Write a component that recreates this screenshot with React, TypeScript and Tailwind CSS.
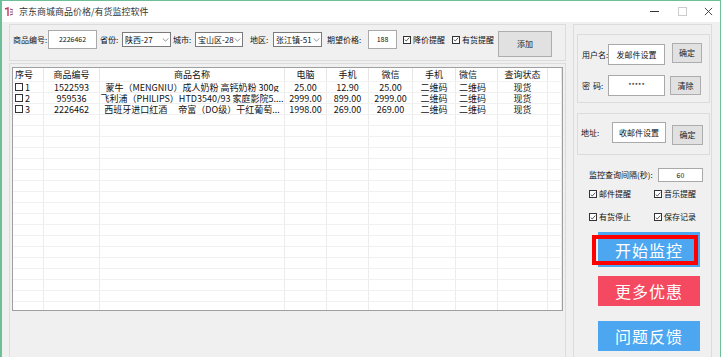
import React from "react";

function Check({ checked = false }: { checked?: boolean }) {
  return (
    <span className="flex h-[8px] w-[8px] shrink-0 items-center justify-center border border-[#333] bg-white">
      {checked && (
        <svg viewBox="0 0 8 8" className="h-[7px] w-[7px]">
          <path d="M1 4.2 L3 6 L7 1.5" fill="none" stroke="#222" strokeWidth="1" />
        </svg>
      )}
    </span>
  );
}

function Btn({ children, className = "" }: { children: React.ReactNode; className?: string }) {
  return (
    <div
      className={`flex items-center justify-center border border-[#adadad] bg-[#e1e1e1] text-[8px] text-[#222] ${className}`}
    >
      {children}
    </div>
  );
}

function Select({ value }: { value: string }) {
  return (
    <div className="mt-[7px] flex h-[15px] w-full items-center justify-between border border-[#7a7a7a] bg-white pl-[2px] pr-[1px] text-[8px]">
      <span className="overflow-hidden whitespace-nowrap">{value}</span>
      <svg viewBox="0 0 8 5" className="h-[4px] w-[7px] shrink-0">
        <path d="M0.5 0.5 L4 4 L7.5 0.5" fill="none" stroke="#555" strokeWidth="0.8" />
      </svg>
    </div>
  );
}

const cols = [
  { title: "序号", w: "w-[31px]", align: "justify-start pl-[2px]" },
  { title: "商品编号", w: "w-[56px]", align: "justify-center" },
  { title: "商品名称", w: "w-[185px]", align: "justify-center" },
  { title: "电脑", w: "w-[42px]", align: "justify-center" },
  { title: "手机", w: "w-[42px]", align: "justify-center" },
  { title: "微信", w: "w-[44px]", align: "justify-center" },
  { title: "手机", w: "w-[43px]", align: "justify-center" },
  { title: "微信", w: "w-[42px]", align: "justify-start pl-[3px]" },
  { title: "查询状态", w: "w-[50px]", align: "justify-center" },
  { title: "", w: "w-[14px]", align: "justify-center" },
];

const rows = [
  ["1", "1522593", "蒙牛（MENGNIU）成人奶粉 高钙奶粉 300g", "25.00", "12.90", "25.00", "二维码", "二维码", "现货"],
  ["2", "959536", "飞利浦（PHILIPS）HTD3540/93 家庭影院5....", "2999.00", "899.00", "2999.00", "二维码", "二维码", "现货"],
  ["3", "2226462", "西班牙进口红酒　 帝富（DO级）干红葡萄...", "1998.00", "269.00", "269.00", "二维码", "二维码", "现货"],
];

export default function App() {
  const empty = Array.from({ length: 19 });
  return (
    <div className="flex h-[357px] w-[721px] flex-col overflow-hidden border-l-2 border-r border-t border-[#6cbf97] bg-[#f0f0f0] font-['Noto_Sans_CJK_SC','Noto_Sans',sans-serif] text-[#111]">
      {/* title bar */}
      <div className="flex h-[21px] shrink-0 items-center bg-white">
        <svg viewBox="0 0 10 10" className="ml-[2px] h-[10px] w-[10px]">
          <path d="M1 2 L4 1 L4 9" fill="none" stroke="#c0395a" strokeWidth="1.4" />
          <path d="M6 2 L9 3 M6 5 L9 5 M6 8 L9 7" stroke="#8a4a8c" strokeWidth="1.2" />
        </svg>
        <span className="ml-[5px] text-[9px] text-[#333]">京东商城商品价格/有货监控软件</span>
        <div className="ml-auto flex items-center">
          <span className="h-px w-[9px] bg-[#333]" />
          <span className="ml-[19px] h-[9px] w-[9px] border border-[#ccc]" />
          <svg viewBox="0 0 10 10" className="ml-[17px] mr-[7px] h-[9px] w-[9px]">
            <path d="M1 1 L9 9 M9 1 L1 9" stroke="#333" strokeWidth="1" />
          </svg>
        </div>
      </div>

      {/* body */}
      <div className="flex flex-1 gap-[7px] pl-[7px] pt-[2px]">
        {/* left column */}
        <div className="flex w-[557px] flex-col gap-[2px]">
          <div className="flex h-[37px] shrink-0 items-start border border-[#dcdcdc] pl-[3px] text-[8px]">
            <span className="mt-[5px] flex h-[19px] w-[35px] items-center whitespace-nowrap">商品编号:</span>
            <div className="mt-[5px] flex h-[19px] w-[49px] items-center justify-center border border-[#a9a9a9] bg-white text-[7px]">
              2226462
            </div>
            <span className="ml-[3px] mt-[5px] flex h-[19px] w-[22px] items-center">省份:</span>
            <div className="w-[49px]">
              <Select value="陕西-27" />
            </div>
            <span className="ml-[2px] mt-[5px] flex h-[19px] w-[22px] items-center">城市:</span>
            <div className="w-[48px]">
              <Select value="宝山区-28" />
            </div>
            <span className="ml-[7px] mt-[5px] flex h-[19px] w-[23px] items-center">地区:</span>
            <div className="w-[49px]">
              <Select value="张江镇-51" />
            </div>
            <span className="ml-[5px] mt-[5px] flex h-[19px] w-[41px] items-center whitespace-nowrap">期望价格:</span>
            <div className="mt-[5px] flex h-[19px] w-[29px] items-center justify-center border border-[#a9a9a9] bg-white text-[7px]">
              188
            </div>
            <div className="ml-[6px] mt-[5px] flex h-[19px] w-[49px] items-center gap-[2px]">
              <Check checked />
              <span>降价提醒</span>
            </div>
            <div className="mt-[5px] flex h-[19px] w-[46px] items-center gap-[2px]">
              <Check checked />
              <span>有货提醒</span>
            </div>
            <Btn className="mt-[6px] h-[26px] w-[54px]">添加</Btn>
          </div>

          <div className="flex-1 border border-b-0 border-[#dcdcdc] pl-[2px] pt-[3px]">
            <div className="h-[244px] w-[551px] overflow-hidden border border-[#a0a0a0] bg-white text-[9px] leading-[11px]">
              <div className="flex h-[14px] border-b border-[#f2f2f2]">
                {cols.map((c, i) => (
                  <div key={i} className={`flex items-center border-r border-[#e6e6e6] ${c.w} ${c.align}`}>
                    {c.title}
                  </div>
                ))}
              </div>
              {rows.map((r) => (
                <div key={r[0]} className="flex h-[11px] border-b border-[#f0f0f0]">
                  <div className={`flex items-center gap-[2px] border-r border-[#ececec] ${cols[0].w} ${cols[0].align}`}>
                    <Check />
                    <span>{r[0]}</span>
                  </div>
                  {r.slice(1).map((v, i) => (
                    <div
                      key={i}
                      className={`flex items-center whitespace-nowrap border-r border-[#ececec] ${i === 1 ? "overflow-hidden" : ""} ${cols[i + 1].w} ${cols[i + 1].align}`}
                    >
                      {v}
                    </div>
                  ))}
                  <div className={`border-r border-[#ececec] ${cols[9].w}`} />
                </div>
              ))}
              {empty.map((_, k) => (
                <div key={k} className="flex h-[11px] border-b border-[#f0f0f0]">
                  {cols.map((c, i) => (
                    <div key={i} className={`border-r border-[#ececec] ${c.w}`} />
                  ))}
                </div>
              ))}
            </div>
          </div>
        </div>

        {/* right column */}
        <div className="flex w-[139px] flex-col border border-b-0 border-[#dcdcdc] px-[3px] pt-[9px] text-[8px]">
          <div className="flex h-[69px] w-[133px] flex-col border border-[#dcdcdc] pl-[4px]">
            <div className="mt-[8px] flex items-start">
              <span className="mt-[1px] flex h-[21px] w-[26px] items-center whitespace-nowrap">用户名:</span>
              <div className="mt-[1px] flex h-[21px] w-[57px] items-center justify-center border border-[#a9a9a9] bg-white">
                发邮件设置
              </div>
              <Btn className="ml-[7px] h-[20px] w-[30px]">确定</Btn>
            </div>
            <div className="mt-[10px] flex items-start">
              <span className="flex h-[21px] w-[26px] items-center whitespace-nowrap">
                密<span className="ml-[3px]">码:</span>
              </span>
              <div className="flex h-[21px] w-[57px] items-center justify-center border border-[#a9a9a9] bg-white text-[7px]">
                *****
              </div>
              <Btn className="ml-[5px] mt-[1px] h-[19px] w-[31px]">清除</Btn>
            </div>
          </div>

          <div className="mt-[10px] flex h-[42px] w-[133px] items-start border border-[#dcdcdc] pl-[3px]">
            <span className="mt-[8px] flex h-[21px] w-[31px] items-center">地址:</span>
            <div className="mt-[8px] flex h-[21px] w-[54px] items-center justify-center border border-[#a9a9a9] bg-white">
              收邮件设置
            </div>
            <Btn className="ml-[6px] mt-[11px] h-[20px] w-[31px]">确定</Btn>
          </div>

          <div className="ml-[12px] mt-[13px] flex items-center">
            <span className="w-[69px] whitespace-nowrap">监控查询间隔(秒):</span>
            <div className="flex h-[14px] w-[45px] items-center justify-center border border-[#a9a9a9] bg-white text-[7px]">
              60
            </div>
          </div>

          <div className="ml-[12px] mt-[6px] grid grid-cols-[65px_60px] gap-y-[11px]">
            {["邮件提醒", "音乐提醒", "有货停止", "保存记录"].map((t) => (
              <div key={t} className="flex items-center gap-[2px]">
                <Check checked />
                <span>{t}</span>
              </div>
            ))}
          </div>

          <div className="relative ml-[21px] mt-[9px] flex h-[35px] w-[102px] items-center justify-center bg-[#4da6f0] text-[16px] tracking-[1px] text-white">
            开始监控
            <div className="absolute left-[-6px] top-[3px] h-[30px] w-[106px] border-[4px] border-[#f00]" />
          </div>
          <div className="ml-[21px] mt-[9px] flex h-[30px] w-[102px] items-center justify-center bg-[#f44960] text-[16px] tracking-[1px] text-white">
            更多优惠
          </div>
          <div className="ml-[21px] mt-[15px] flex h-[30px] w-[102px] items-center justify-center bg-[#4da6f0] text-[16px] tracking-[1px] text-white">
            问题反馈
          </div>
        </div>
      </div>
    </div>
  );
}
